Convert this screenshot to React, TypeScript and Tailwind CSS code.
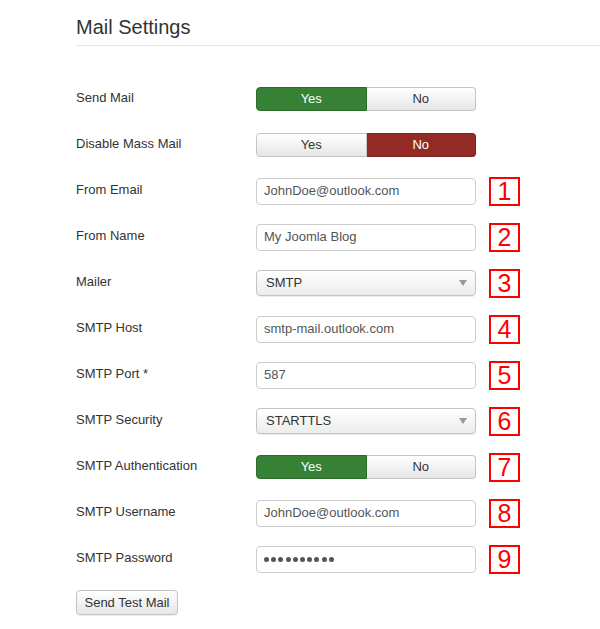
import React from "react";

const Toggle = ({ value, activeColor }: { value: "yes" | "no"; activeColor: string }) => {
  const inactive =
    "bg-gradient-to-b from-white to-[#e6e6e6] text-[#333] border-[#c4c4c4]";
  return (
    <div className="flex w-[220px] h-[24px] text-[13px]">
      <div
        className={
          "flex-1 flex items-center justify-center rounded-l-[4px] border " +
          (value === "yes" ? activeColor : inactive)
        }
      >
        Yes
      </div>
      <div
        className={
          "flex-1 flex items-center justify-center rounded-r-[4px] border border-l-0 " +
          (value === "no" ? activeColor : inactive)
        }
      >
        No
      </div>
    </div>
  );
};

const Input = ({ value, password }: { value: string; password?: boolean }) => (
  <div className="w-[220px] h-[27px] border border-[#cccccc] rounded-[4px] bg-white flex items-center px-[7px] text-[13px] text-[#555]">
    {password ? (
      <span className="flex gap-[2.2px]">
        {Array.from({ length: 10 }).map((_, i) => (
          <span key={i} className="block w-[5px] h-[5px] rounded-full bg-[#555]" />
        ))}
      </span>
    ) : (
      value
    )}
  </div>
);

const Select = ({ value }: { value: string }) => (
  <div className="w-[220px] h-[26px] border border-[#c4c4c4] rounded-[4px] bg-gradient-to-b from-white to-[#ececec] flex items-center justify-between pl-[9px] pr-[8px] text-[13px] text-[#333] shadow-[0_1px_1px_rgba(0,0,0,0.08)]">
    <span>{value}</span>
    <svg width="8" height="6" viewBox="0 0 8 6">
      <path d="M0 0 L8 0 L4 6 Z" fill="#999" />
    </svg>
  </div>
);

const Badge = ({ n }: { n: number }) => (
  <div className="ml-[13px] w-[31px] h-[29px] border-2 border-[#ff0000] flex items-center justify-center text-[#ff0000] text-[25px] leading-none">
    {n}
  </div>
);

const GREEN = "bg-[#378137] border-[#2c6b2c] text-white";
const RED = "bg-[#942a25] border-[#7a221e] text-white";

const Row = ({ label, children }: { label: string; children: React.ReactNode }) => (
  <div className="flex items-center h-[46px]">
    <div className="w-[180px] text-[13px] text-[#333] -mt-[2px]">{label}</div>
    {children}
  </div>
);

export default function App() {
  return (
    <div
      className="w-[600px] h-[629px] bg-white pl-[76px] overflow-hidden"
      style={{ fontFamily: '"Liberation Sans", Arial, sans-serif' }}
    >
      <div className="pt-[13px]">
        <h1 className="text-[20px] leading-[28px] text-[#333] pb-[4px] border-b border-[#e5e5e5]">
          Mail Settings
        </h1>
      </div>
      <div className="mt-[30px] flex flex-col">
        <Row label="Send Mail">
          <Toggle value="yes" activeColor={GREEN} />
        </Row>
        <Row label="Disable Mass Mail">
          <Toggle value="no" activeColor={RED} />
        </Row>
        <Row label="From Email">
          <Input value="JohnDoe@outlook.com" />
          <Badge n={1} />
        </Row>
        <Row label="From Name">
          <Input value="My Joomla Blog" />
          <Badge n={2} />
        </Row>
        <Row label="Mailer">
          <Select value="SMTP" />
          <Badge n={3} />
        </Row>
        <Row label="SMTP Host">
          <Input value="smtp-mail.outlook.com" />
          <Badge n={4} />
        </Row>
        <Row label="SMTP Port *">
          <Input value="587" />
          <Badge n={5} />
        </Row>
        <Row label="SMTP Security">
          <Select value="STARTTLS" />
          <Badge n={6} />
        </Row>
        <Row label="SMTP Authentication">
          <Toggle value="yes" activeColor={GREEN} />
          <Badge n={7} />
        </Row>
        <Row label="SMTP Username">
          <Input value="JohnDoe@outlook.com" />
          <Badge n={8} />
        </Row>
        <Row label="SMTP Password">
          <Input value="" password />
          <Badge n={9} />
        </Row>
      </div>
      <div className="mt-[8px]">
        <div className="inline-flex items-center justify-center w-[102px] h-[25px] border border-[#c4c4c4] rounded-[4px] bg-gradient-to-b from-white to-[#e6e6e6] text-[13px] text-[#333] shadow-[0_1px_1px_rgba(0,0,0,0.08)]">
          Send Test Mail
        </div>
      </div>
    </div>
  );
}
